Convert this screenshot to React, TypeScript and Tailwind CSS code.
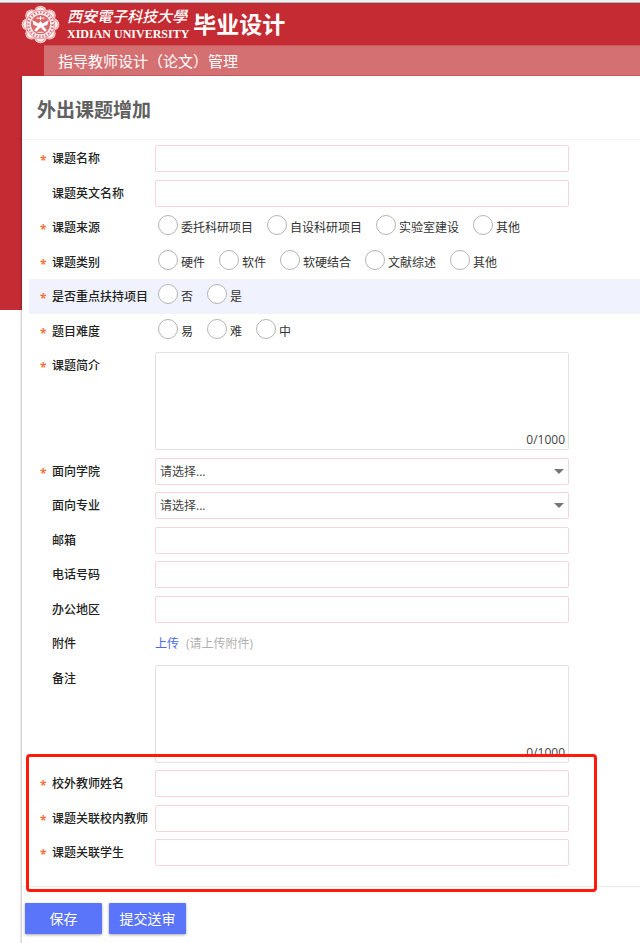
import type { ReactNode } from "react";

const inputClass =
  "block h-[27px] w-full rounded-xs border border-[#f5d6d6] bg-white px-1 text-[12px] text-[#444] outline-none focus:border-[#e09a9a]";

function Seal() {
  const petals = Array.from({ length: 8 }, (_, i) => {
    const a = (i * Math.PI) / 4;
    return { x: 20 + 13 * Math.sin(a), y: 20 - 13 * Math.cos(a) };
  });
  return (
    <svg viewBox="0 0 40 40" className="size-[39px] shrink-0" aria-hidden="true">
      {petals.map((p, i) => (
        <circle key={i} cx={p.x} cy={p.y} r="6.3" fill="#fbeeee" />
      ))}
      {petals.map((p, i) => (
        <circle key={i} cx={p.x} cy={p.y} r="5.1" fill="none" stroke="#d9686d" strokeWidth="0.7" />
      ))}
      <circle cx="20" cy="20" r="14.6" fill="#fbeeee" stroke="#d4585d" strokeWidth="0.6" />
      <circle cx="20" cy="20" r="12.4" fill="none" stroke="#dc7c80" strokeWidth="2.4" strokeDasharray="1.6 1.6" />
      <circle cx="20" cy="20" r="10" fill="#d9686d" />
      <path d="M11.5 15.5l6.5 3.5 2-2.5 2 2.5 6.5-3.5-1.5 5-4 1.2 3.5 4.3-2 1.5-4.5-4.5-4.5 4.5-2-1.5 3.500-4.300-4-1.200z" fill="#fff" />
      <path d="M16 13.500h8M17 28h6M20 11.500v4" stroke="#fff" strokeWidth="1" fill="none" />
    </svg>
  );
}

type RowProps = {
  label: string;
  id: string;
  required?: boolean;
  highlighted?: boolean;
  group?: boolean;
  children: ReactNode;
};

function Row({ label, id, required, highlighted, group, children }: RowProps) {
  return (
    <div
      className={`flex items-start pt-1 pl-[11px] odd:pb-1 even:pb-[3px] ${highlighted ? "bg-[#f0f2fe]" : ""}`}
    >
      <span className="h-[27px] w-3 shrink-0 pt-0.5 text-[12px] leading-[27px] font-bold text-[#f0733c]">
        {required ? "*" : ""}
      </span>
      {group ? (
        <span id={`${id}-label`} className="w-[103px] shrink-0 text-[12px] leading-[27px] font-medium whitespace-nowrap text-[#222]">
          {label}
        </span>
      ) : (
        <label htmlFor={id} className="w-[103px] shrink-0 text-[12px] leading-[27px] font-medium whitespace-nowrap text-[#222]">
          {label}
        </label>
      )}
      <div className="mr-[71px] min-w-0 flex-1">{children}</div>
    </div>
  );
}

function TextRow({ label, id, required }: { label: string; id: string; required?: boolean }) {
  return (
    <Row label={label} id={id} required={required}>
      <input id={id} type="text" className={inputClass} />
    </Row>
  );
}

function RadioRow({ label, id, options, highlighted }: { label: string; id: string; options: string[]; highlighted?: boolean }) {
  return (
    <Row label={label} id={id} required highlighted={highlighted} group>
      <div role="radiogroup" aria-labelledby={`${id}-label`} className="flex gap-3.5 pl-[3px]">
        {options.map((option) => (
          <label key={option} className="flex h-[27px] items-center gap-[3px] text-[12px] whitespace-nowrap text-[#333]">
            <input
              type="radio"
              name={id}
              className="mb-[5px] size-5 shrink-0 appearance-none rounded-full border border-[#b4b4b4] bg-white checked:border-[6px] checked:border-[#5a74fa]"
            />
            <span>{option}</span>
          </label>
        ))}
      </div>
    </Row>
  );
}

function SelectRow({ label, id, required }: { label: string; id: string; required?: boolean }) {
  return (
    <Row label={label} id={id} required={required}>
      <div className="relative">
        <select id={id} className={`${inputClass} appearance-none`}>
          <option>请选择...</option>
        </select>
        <svg viewBox="0 0 10 5" className="pointer-events-none absolute top-[11px] right-[5px] h-[5px] w-[10px]" aria-hidden="true">
          <path d="M0 0h10L5 5z" fill="#777" />
        </svg>
      </div>
    </Row>
  );
}

function AreaRow({ label, id, required }: { label: string; id: string; required?: boolean }) {
  return (
    <Row label={label} id={id} required={required}>
      <div className="relative">
        <textarea
          id={id}
          className="block h-[98px] w-full resize-none rounded-xs border border-[#e2e2e2] bg-white p-1 text-[12px] text-[#444] outline-none"
        />
        <span className="pointer-events-none absolute right-1 bottom-0.5 text-[12px] leading-4 text-[#444]">0/1000</span>
      </div>
    </Row>
  );
}

export default function App() {
  return (
    <div className="flex min-h-screen flex-col bg-white font-['Open_Sans','Noto_Sans_CJK_SC',sans-serif]">
      <header className="bg-[#c52b32]">
        <div className="h-[3px] border-b border-[#a9bcc4] bg-[#edf1f3]" />
        <div className="flex h-[42px] items-center pl-[21px] text-white">
          <Seal />
          <div className="ml-[7px] whitespace-nowrap">
            <div className="font-['Noto_Sans_CJK_TC',sans-serif] text-[15px] leading-[20px] font-medium italic">西安電子科技大學</div>
            <div className="font-['Liberation_Serif',serif] text-[12px] leading-4 font-bold">XIDIAN UNIVERSITY</div>
          </div>
          <h1 className="ml-1 text-[23px] leading-[32px] font-bold whitespace-nowrap">毕业设计</h1>
        </div>
        <div className="ml-11 h-[31px] border-y border-[#cd5a5e] bg-[#d57072] pl-[14px] text-[15px] leading-[31px] text-white">
          指导教师设计（论文）管理
        </div>
      </header>

      <div className="flex flex-1">
        <div className="w-[22px] shrink-0">
          <div className="h-[234px] bg-[#c52b32]" />
        </div>
        <main className="min-w-0 flex-1 bg-white shadow-[-1px_1px_2px_rgba(0,0,0,0.25)]">
          <h2 className="h-16 border-b border-[#f4f4f4] pl-[15px] text-[19px] leading-[68px] font-bold text-[#606060]">
            外出课题增加
          </h2>
          <form>
            <div className="pt-px pb-4 pl-[7px]">
              <div>
                <TextRow label="课题名称" id="title" required />
                <TextRow label="课题英文名称" id="title-en" />
                <RadioRow label="课题来源" id="source" options={["委托科研项目", "自设科研项目", "实验室建设", "其他"]} />
                <RadioRow label="课题类别" id="category" options={["硬件", "软件", "软硬结合", "文献综述", "其他"]} />
                <RadioRow label="是否重点扶持项目" id="key-project" options={["否", "是"]} highlighted />
                <RadioRow label="题目难度" id="difficulty" options={["易", "难", "中"]} />
                <AreaRow label="课题简介" id="summary" required />
                <SelectRow label="面向学院" id="college" required />
                <SelectRow label="面向专业" id="major" />
                <TextRow label="邮箱" id="email" />
                <TextRow label="电话号码" id="phone" />
                <TextRow label="办公地区" id="office" />
                <Row label="附件" id="attachment" group>
                  <div className="flex gap-[7px] text-[12px] leading-[27px]">
                    <a href="#upload" className="text-[#4c68f0]">上传</a>
                    <span className="text-[#b0b0b0]">(请上传附件)</span>
                  </div>
                </Row>
                <AreaRow label="备注" id="remark" />
              </div>
              <div className="relative">
                <TextRow label="校外教师姓名" id="outside-teacher" required />
                <TextRow label="课题关联校内教师" id="inside-teacher" required />
                <TextRow label="课题关联学生" id="student" required />
                <div className="pointer-events-none absolute -top-3 right-[43px] -bottom-[22px] -left-[3px] rounded-[4px] border-[3px] border-[#ff1a0c]" />
              </div>
            </div>
            <div className="flex gap-[7px] border-t border-[#ececec] pt-4 pb-[9px] pl-[3px]">
              <button type="button" className="h-[31px] w-[77px] rounded-[1px] bg-[#5a74fa] text-[14px] text-white shadow-[0_1px_3px_rgba(0,0,0,0.35)]">
                保存
              </button>
              <button type="submit" className="h-[31px] w-[77px] rounded-[1px] bg-[#5a74fa] text-[14px] text-white shadow-[0_1px_3px_rgba(0,0,0,0.35)]">
                提交送审
              </button>
            </div>
          </form>
        </main>
      </div>
    </div>
  );
}
